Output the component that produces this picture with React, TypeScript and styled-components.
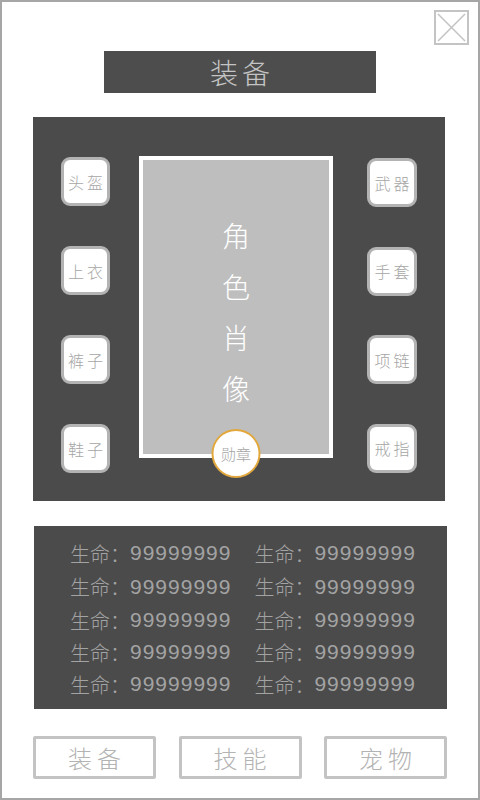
import React from "react";
import styled, { createGlobalStyle } from "styled-components";

const Global = createGlobalStyle`
  html, body { margin: 0; padding: 0; background: #ffffff; }
  * { box-sizing: border-box; }
  body { font-family: "Liberation Sans", "Noto Sans CJK SC", sans-serif; }
`;

const Frame = styled.div`
  width: 480px;
  height: 800px;
  border: 2px solid #a6a6a6;
  background: #ffffff;
  display: flex;
  flex-direction: column;
  align-items: flex-start;
`;

const TopBar = styled.div`
  width: 100%;
  display: flex;
  justify-content: flex-end;
  padding: 8px 9px 0 0;
`;

const CloseBox = styled.button`
  width: 35px;
  height: 35px;
  padding: 0;
  margin: 0;
  border: 2px solid #c4c4c4;
  background: #ffffff;
  display: flex;
  align-items: center;
  justify-content: center;
  cursor: pointer;
`;

const Title = styled.div`
  margin: 6px 0 0 102px;
  width: 272px;
  height: 42px;
  background: #4d4d4d;
  color: #c4c4c4;
  font-family: "Noto Sans CJK SC", sans-serif;
  font-weight: 300;
  font-size: 28px;
  letter-spacing: 4px;
  padding-left: 4px;
  display: flex;
  align-items: center;
  justify-content: center;
`;

const Panel = styled.div`
  margin: 24px 0 0 31px;
  width: 412px;
  height: 384px;
  background: #4b4b4b;
  display: flex;
  align-items: flex-start;
  padding: 39px 0 0 28px;
`;

const SlotColumn = styled.div<{ $offset: number; $width: number }>`
  width: ${(p) => p.$width}px;
  display: flex;
  flex-direction: column;
  justify-content: space-between;
  padding-top: ${(p) => p.$offset}px;
  height: 317px;
`;

const Slot = styled.div`
  width: 100%;
  height: 49px;
  background: #ffffff;
  border: 3px solid #b3b3b3;
  border-radius: 9px;
  display: flex;
  align-items: center;
  justify-content: center;
  color: #a6a6a6;
  font-family: "Noto Sans CJK SC", sans-serif;
  font-weight: 300;
  font-size: 16px;
  letter-spacing: 3px;
  padding-left: 3px;
`;

const Portrait = styled.div`
  position: relative;
  margin: 0 34px 0 29px;
  width: 194px;
  height: 302px;
  background: #bebebe;
  border: 4px solid #ffffff;
  display: flex;
  flex-direction: column;
  align-items: center;
  padding-top: 50px;
  color: #ffffff;
  font-family: "Noto Sans CJK SC", sans-serif;
  font-weight: 300;
  font-size: 28px;
  line-height: 51px;
`;

const Medal = styled.div`
  position: absolute;
  left: 50%;
  bottom: -24px;
  transform: translateX(-50%);
  width: 49px;
  height: 49px;
  border-radius: 50%;
  background: #ffffff;
  border: 2.5px solid #e2a83e;
  display: flex;
  align-items: center;
  justify-content: center;
  color: #a6a6a6;
  font-family: "Noto Sans CJK SC", sans-serif;
  font-weight: 300;
  font-size: 15px;
  line-height: 1;
`;

const Stats = styled.div`
  margin: 25px 0 0 32px;
  width: 413px;
  height: 183px;
  background: #4b4b4b;
  display: grid;
  grid-template-columns: auto auto;
  grid-template-rows: 32px 35px 32px 32px 32px;
  column-gap: 23px;
  justify-content: start;
  padding: 11px 0 0 36px;
`;

const Stat = styled.div`
  display: flex;
  align-items: center;
  color: #a3a3a3;
  font-size: 20px;
  white-space: nowrap;
`;

const StatLabel = styled.span`
  font-family: "Noto Sans CJK SC", sans-serif;
  font-weight: 300;
`;

const StatValue = styled.span`
  font-family: "Liberation Sans", sans-serif;
  font-size: 21px;
  letter-spacing: 1px;
`;

const ButtonRow = styled.div`
  margin: 27px 0 0 31px;
  width: 414px;
  display: flex;
  justify-content: space-between;
`;

const TabButton = styled.button`
  width: 123px;
  height: 43px;
  background: #ffffff;
  border: 3px solid #c3c3c3;
  border-radius: 2px;
  color: #b3b3b3;
  font-family: "Noto Sans CJK SC", sans-serif;
  font-weight: 300;
  font-size: 24px;
  letter-spacing: 5px;
  padding: 0 0 0 5px;
  display: flex;
  align-items: center;
  justify-content: center;
  cursor: pointer;
`;

const leftSlots = ["头盔", "上衣", "裤子", "鞋子"];
const rightSlots = ["武器", "手套", "项链", "戒指"];
const portraitChars = ["角", "色", "肖", "像"];
const tabs = ["装备", "技能", "宠物"];

export default function App() {
  return (
    <>
      <Global />
      <Frame>
        <TopBar>
          <CloseBox aria-label="关闭">
            <svg width="31" height="31" viewBox="0 0 31 31">
              <line x1="2" y1="2" x2="29" y2="29" stroke="#c4c4c4" strokeWidth="1.6" />
              <line x1="29" y1="2" x2="2" y2="29" stroke="#c4c4c4" strokeWidth="1.6" />
            </svg>
          </CloseBox>
        </TopBar>
        <Title>装备</Title>
        <Panel>
          <SlotColumn $offset={1} $width={49}>
            {leftSlots.map((s) => (
              <Slot key={s}>{s}</Slot>
            ))}
          </SlotColumn>
          <Portrait>
            {portraitChars.map((c) => (
              <span key={c}>{c}</span>
            ))}
            <Medal>勋章</Medal>
          </Portrait>
          <SlotColumn $offset={2} $width={50}>
            {rightSlots.map((s) => (
              <Slot key={s}>{s}</Slot>
            ))}
          </SlotColumn>
        </Panel>
        <Stats>
          {Array.from({ length: 10 }).map((_, i) => (
            <Stat key={i}>
              <StatLabel>生命：</StatLabel>
              <StatValue>99999999</StatValue>
            </Stat>
          ))}
        </Stats>
        <ButtonRow>
          {tabs.map((t) => (
            <TabButton key={t}>{t}</TabButton>
          ))}
        </ButtonRow>
      </Frame>
    </>
  );
}
